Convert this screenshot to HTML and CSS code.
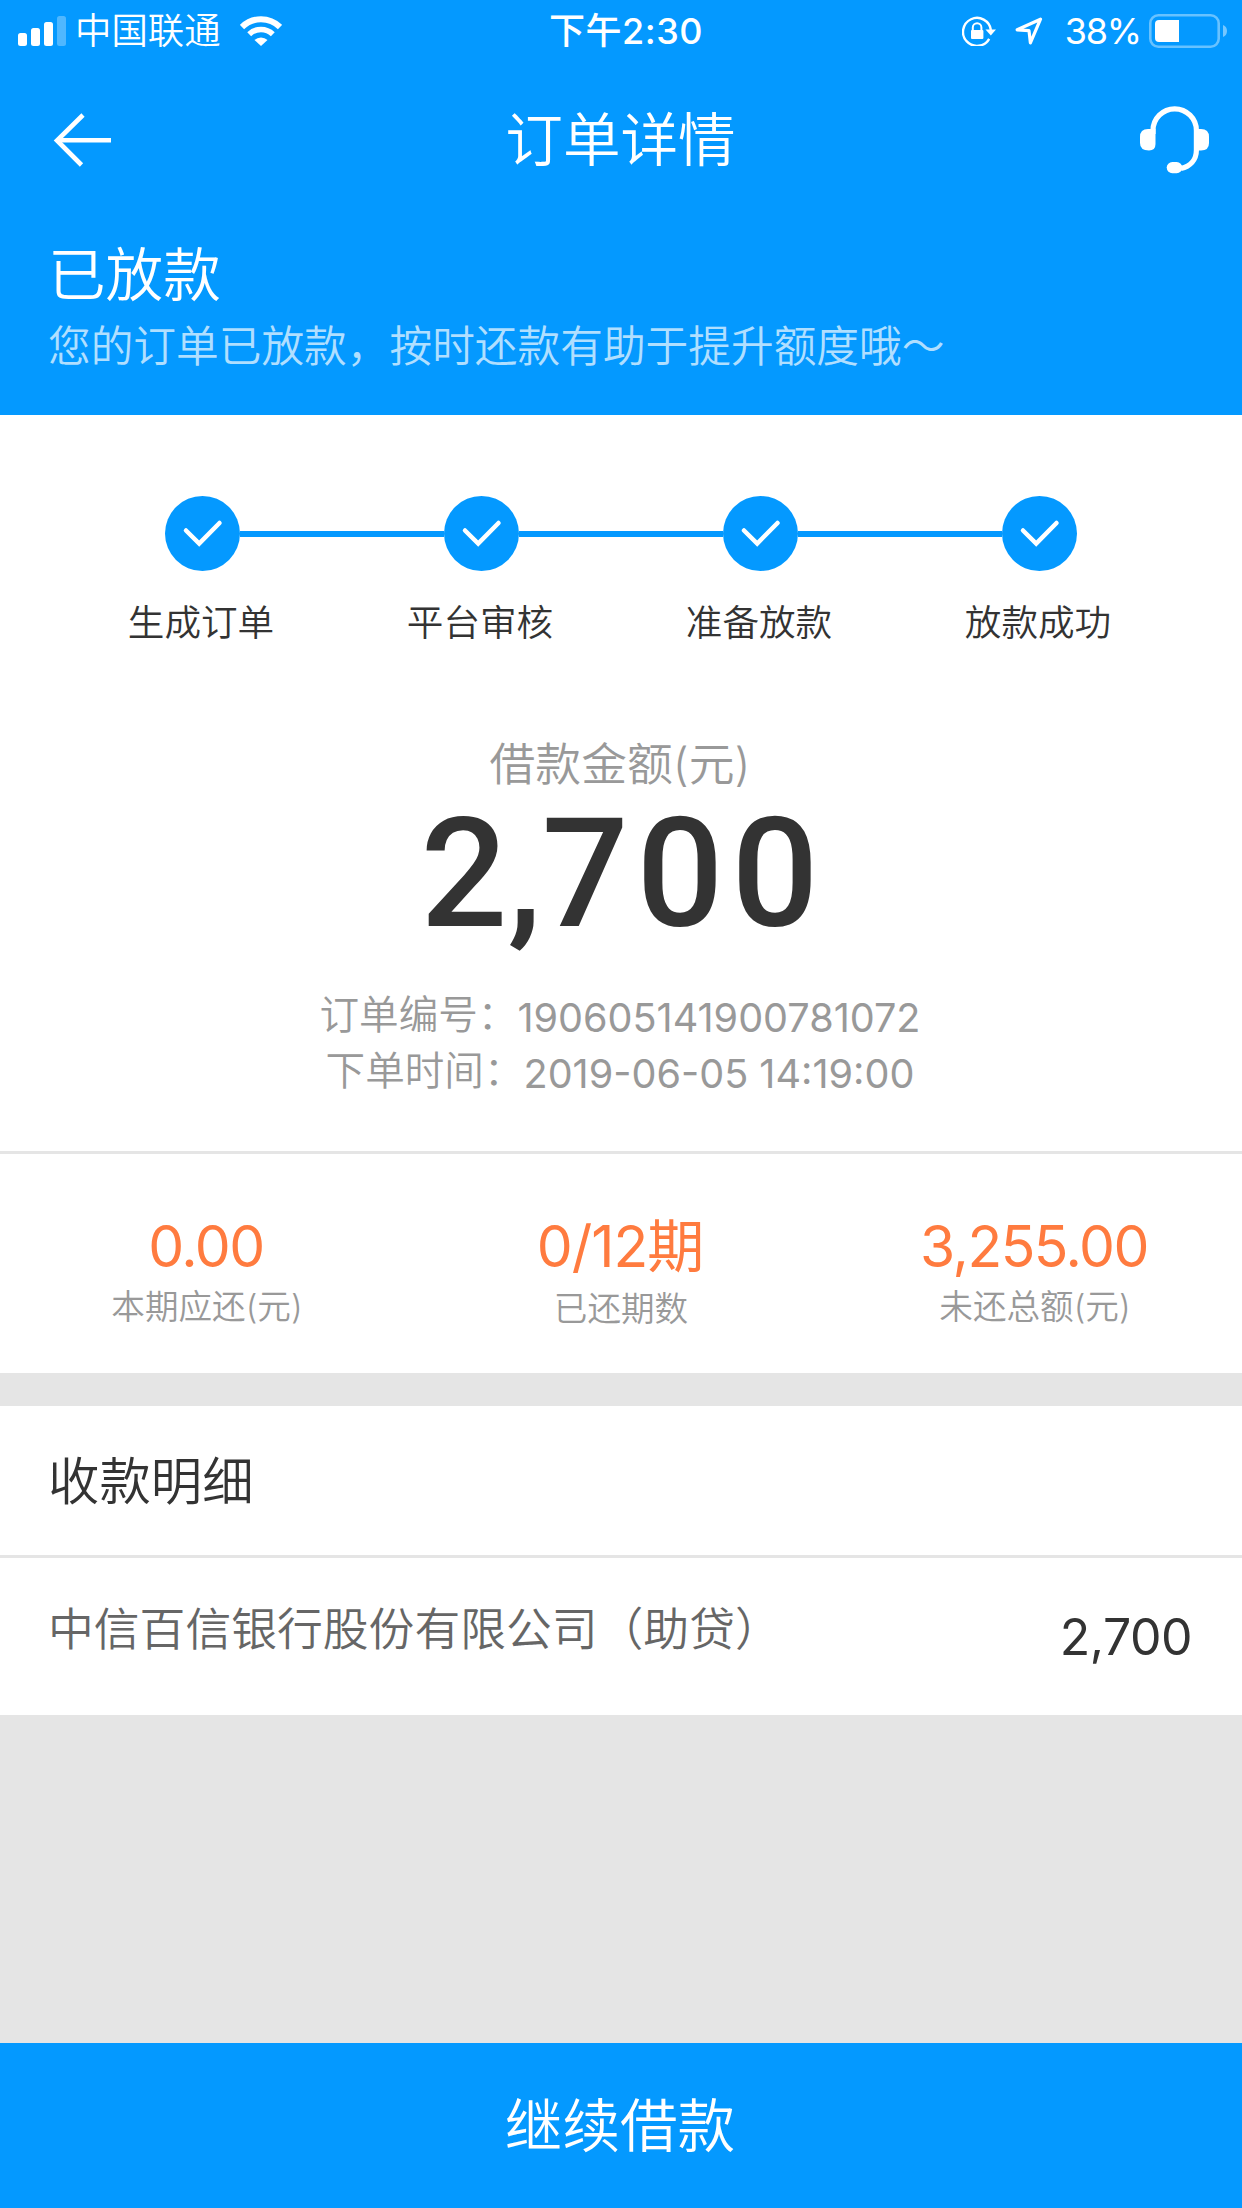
FILE: index.html
```html
<!DOCTYPE html>
<html lang="zh-CN">
<head>
    <meta charset="UTF-8">
    <meta name="viewport" content="width=device-width, initial-scale=1.0">
    <title>订单详情</title>
    <link rel="stylesheet" href="styles.css">
</head>
<body>

<header>
    <div class="status-bar">
        <div class="status-left">
            <svg class="signal" width="48" height="30" viewBox="0 0 48 30" fill="#fff">
                <rect x="0" y="17" width="9" height="13" rx="2.5"/>
                <rect x="13" y="12" width="9" height="18" rx="2.5"/>
                <rect x="26" y="6" width="9" height="24" rx="2.5"/>
                <rect x="39" y="0" width="9" height="30" rx="2.5" opacity="0.3"/>
            </svg>
            <span class="carrier">中国联通</span>
            <svg class="wifi" width="42" height="30" viewBox="0 0 42 30">
                <path d="M2 11 A27 27 0 0 1 40 11" fill="none" stroke="#fff" stroke-width="6"/>
                <path d="M9.2 18.2 A17 17 0 0 1 32.8 18.2" fill="none" stroke="#fff" stroke-width="5.6"/>
                <path d="M14.5 24 A9.5 9.5 0 0 1 27.5 24 L21 30 Z" fill="#fff"/>
            </svg>
        </div>
        <div class="clock">下午2:30</div>
        <div class="status-right">
            <svg class="lock" width="34" height="30" viewBox="0 0 34 30">
                <path d="M27.2 22.8 A14 14 0 1 1 28.9 14" fill="none" stroke="#fff" stroke-width="2.4"/>
                <path d="M23.5 13.5 L34 13.5 L28.8 19.6 Z" fill="#fff"/>
                <path d="M10.8 15 V11.5 A4.3 4.3 0 0 1 19.4 11.5 V15" fill="none" stroke="#fff" stroke-width="2"/>
                <rect x="9" y="14" width="12.4" height="9" rx="1" fill="#fff"/>
            </svg>
            <svg class="location" width="28" height="28" viewBox="0 0 28 28">
                <path d="M25.5 2.2 L2.2 12.8 L14 13.6 L15.4 25.8 Z" fill="none" stroke="#fff" stroke-width="3.2" stroke-linejoin="round"/>
            </svg>
            <span class="percent">38%</span>
            <svg class="battery" width="78" height="34" viewBox="0 0 78 34">
                <rect x="1.3" y="1.3" width="68.4" height="31.4" rx="8" fill="none" stroke="#fff" stroke-width="2.6" opacity="0.4"/>
                <path d="M10 6 H30 V28 H10 A4 4 0 0 1 6 24 V10 A4 4 0 0 1 10 6 Z" fill="#fff"/>
                <path d="M74 11 A6.5 6.5 0 0 1 74 23 Z" fill="#fff" opacity="0.45"/>
            </svg>
        </div>
    </div>

    <nav class="nav-bar">
        <svg class="back" width="60" height="54" viewBox="0 0 60 54" fill="none" stroke="#fff" stroke-width="4.6">
            <path d="M30 2 L4 27.5 L28.5 52"/>
            <path d="M4 27.3 H58"/>
        </svg>
        <h1>订单详情</h1>
        <svg class="service" width="70" height="68" viewBox="0 0 70 68" fill="none" stroke="#fff" stroke-width="5.2">
            <path d="M13 28 V24.5 A21.7 21.7 0 0 1 56.4 24.5 V44 C56.4 54 50 60.5 41 62.5"/>
            <path d="M15.5 23 V38 Q15.5 44.5 9 44.5 Q0 44.5 0 37 V31 Q0 23 8 23 Z" fill="#fff" stroke="none"/>
            <path d="M54 23 H61 Q69 23 69 31 V37 Q69 44.5 61 44.5 H54 Z" fill="#fff" stroke="none"/>
            <rect x="26.7" y="56" width="15.6" height="11.2" rx="5.6" fill="#fff" stroke="none"/>
        </svg>
    </nav>

    <div class="order-status">
        <h2>已放款</h2>
        <p>您的订单已放款，按时还款有助于提升额度哦～</p>
    </div>
</header>

<section class="progress">
    <div class="step">
        <svg class="check" width="75" height="75" viewBox="0 0 75 75">
            <circle cx="37.5" cy="37.5" r="37.5"/>
            <path d="M21 34.5 L34.2 47.5 L54.5 27"/>
        </svg>
        <span>生成订单</span>
    </div>
    <div class="step">
        <svg class="check" width="75" height="75" viewBox="0 0 75 75">
            <circle cx="37.5" cy="37.5" r="37.5"/>
            <path d="M21 34.5 L34.2 47.5 L54.5 27"/>
        </svg>
        <span>平台审核</span>
    </div>
    <div class="step">
        <svg class="check" width="75" height="75" viewBox="0 0 75 75">
            <circle cx="37.5" cy="37.5" r="37.5"/>
            <path d="M21 34.5 L34.2 47.5 L54.5 27"/>
        </svg>
        <span>准备放款</span>
    </div>
    <div class="step">
        <svg class="check" width="75" height="75" viewBox="0 0 75 75">
            <circle cx="37.5" cy="37.5" r="37.5"/>
            <path d="M21 34.5 L34.2 47.5 L54.5 27"/>
        </svg>
        <span>放款成功</span>
    </div>
</section>

<section class="amount">
    <p class="amount-label">借款金额(元)</p>
    <p class="amount-value"><span class="thousands">2,</span>700</p>
    <div class="order-info">
        <span>订单编号：</span>
        <span class="order-number">190605141900781072</span>
    </div>
    <div class="order-info">
        <span>下单时间：</span>
        <span class="order-time">2019-06-05 14:19:00</span>
    </div>
</section>

<section class="repayment">
    <div class="stat">
        <p class="stat-value">0.00</p>
        <p class="stat-label">本期应还(元)</p>
    </div>
    <div class="stat">
        <p class="stat-value periods">0/12期</p>
        <p class="stat-label periods-label">已还期数</p>
    </div>
    <div class="stat">
        <p class="stat-value">3,255.00</p>
        <p class="stat-label">未还总额(元)</p>
    </div>
</section>

<section class="receipt">
    <h3>收款明细</h3>
    <div class="receipt-row">
        <span class="bank">中信百信银行股份有限公司（助贷）</span>
        <span class="receipt-amount">2,700</span>
    </div>
</section>

<button class="borrow-button">继续借款</button>

</body>
</html>
```
FILE: styles.css
```css
* {
    box-sizing: border-box;
}

body {
    font-family: Inter, "Noto Sans CJK SC", sans-serif;
    font-weight: 350;
    margin: 0;
    height: 2208px;
    display: flex;
    flex-direction: column;
    background-color: #e5e5e5;
    color: #333;
    overflow: hidden;
}

h1, h2, h3, p {
    margin: 0;
    font-weight: 350;
}

svg {
    display: block;
    flex-shrink: 0;
}

header {
    height: 415px;
    background-color: #0499ff;
    color: white;
}

.status-bar {
    display: grid;
    grid-template-columns: 1fr auto 1fr;
    height: 60px;
    padding: 0 15px 0 18px;
    font-size: 36px;
    line-height: 62px;
}

.status-left, .status-right {
    display: flex;
    align-items: center;
}

.status-right {
    justify-content: flex-end;
}

.carrier {
    margin-left: 9px;
    font-size: 36.4px;
}

.wifi {
    margin-left: 19px;
}

.clock {
    padding-left: 7px;
    font-weight: 500;
    letter-spacing: 0.5px;
}

.location {
    margin-left: 19px;
}

.percent {
    margin-left: 22px;
    font-weight: 400;
    letter-spacing: -1.2px;
}

.battery {
    margin-left: 8px;
}

.nav-bar {
    display: grid;
    grid-template-columns: 1fr auto 1fr;
    align-items: center;
    height: 156px;
    padding: 3px 32px 0 53px;
}

.nav-bar h1 {
    margin-left: -22px;
    font-size: 57.6px;
    line-height: 80px;
}

.service {
    justify-self: end;
}

.order-status {
    padding: 19px 48px 0;
}

.order-status h2 {
    font-size: 57.6px;
    line-height: 80px;
}

.order-status p {
    margin-top: 2px;
    font-size: 42.7px;
    line-height: 60px;
    color: rgba(255, 255, 255, 0.7);
}

.progress {
    display: grid;
    grid-template-columns: repeat(4, 279px);
    justify-content: center;
    height: 319px;
    padding-top: 81px;
    background-color: white;
}

.step {
    display: grid;
    grid-template-columns: 1fr 75px 1fr;
    grid-template-rows: 75px 50px;
    row-gap: 27px;
    align-items: center;
}

.step::before, .step::after {
    content: "";
    grid-row: 1;
    height: 6px;
    background-color: #0499ff;
}

.step::before {
    grid-column: 1;
}

.step::after {
    grid-column: 3;
}

.step:first-child::before, .step:last-child::after {
    background-color: transparent;
}

.step span {
    grid-column: 1 / 4;
    grid-row: 2;
    padding-right: 3px;
    font-size: 36.6px;
    line-height: 50px;
    text-align: center;
}

.check {
    grid-column: 2;
    grid-row: 1;
}

.check circle {
    fill: #0499ff;
}

.check path {
    fill: none;
    stroke: white;
    stroke-width: 4.5;
    stroke-linecap: round;
}

.amount {
    height: 417px;
    background-color: white;
    color: #999;
    text-align: center;
}

.amount-label {
    padding: 1px 2px 0 0;
    font-size: 45.8px;
    line-height: 60px;
}

.amount-value {
    padding-left: 5px;
    font-family: Roboto, sans-serif;
    font-size: 153px;
    font-weight: 500;
    line-height: 157px;
    letter-spacing: 8px;
    color: #333;
}

.thousands {
    letter-spacing: 0;
}

.order-info {
    display: flex;
    justify-content: center;
    height: 56px;
    padding-right: 2px;
    font-size: 39.6px;
    line-height: 57px;
}

.amount-value + .order-info {
    margin-top: 35px;
}

.order-number, .order-time {
    padding-top: 3px;
    font-weight: 400;
}

.repayment {
    display: grid;
    grid-template-columns: repeat(3, 1fr);
    height: 222px;
    padding-top: 63px;
    border-top: 3px solid #e5e5e5;
    background-color: white;
    text-align: center;
}

.stat-value {
    padding-right: 2px;
    font-size: 57px;
    font-weight: 400;
    line-height: 60px;
    letter-spacing: -1.5px;
    color: #ff7b3f;
}

.periods {
    letter-spacing: -1px;
}

.stat-label {
    margin-top: 5px;
    font-size: 33.6px;
    line-height: 50px;
    color: #999;
}

.periods-label {
    margin-top: 7px;
}

.receipt {
    height: 309px;
    margin-top: 33px;
    background-color: white;
}

.receipt h3 {
    height: 152px;
    padding-left: 48px;
    font-size: 51.4px;
    line-height: 151px;
    border-bottom: 3px solid #e5e5e5;
}

.receipt-row {
    display: flex;
    justify-content: space-between;
    padding: 0 50px 0 48px;
    line-height: 144px;
}

.bank {
    font-size: 45.8px;
    color: #666;
}

.receipt-amount {
    padding-top: 7px;
    font-size: 50px;
    font-weight: 400;
    letter-spacing: -0.5px;
}

.borrow-button {
    height: 165px;
    margin-top: auto;
    padding: 2px 2px 0 0;
    border: none;
    background-color: #0499ff;
    color: white;
    font-family: inherit;
    font-size: 57.6px;
    font-weight: 350;
    line-height: 163px;
    cursor: pointer;
}
```
